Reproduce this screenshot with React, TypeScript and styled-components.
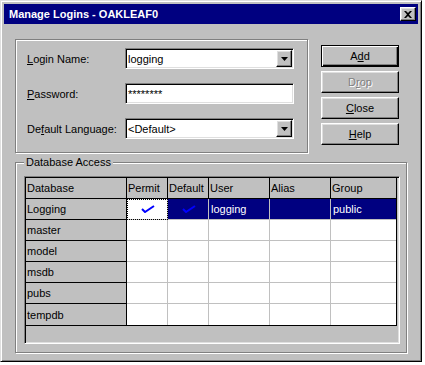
import React from 'react';
import styled, { createGlobalStyle } from 'styled-components';

//
// Global

const GlobalStyle = createGlobalStyle`
  html, body {
    margin: 0;
    padding: 0;
    background: #fff;
  }
  body {
    font-family: "Liberation Sans", Arial, sans-serif;
    font-size: 11px;
    color: #000;
  }
`;

//
// Styled Components

const Window = styled.div`
  box-sizing: border-box;
  width: 422px;
  height: 362px;
  padding: 3px;
  background: #c0c0c0;
  border: 1px solid;
  border-color: #dfdfdf #000 #000 #dfdfdf;
  box-shadow: inset 1px 1px #fff, inset -1px -1px #808080;
  display: flex;
  flex-direction: column;
`;

const TitleBar = styled.div`
  height: 20px;
  display: flex;
  align-items: center;
  justify-content: space-between;
  padding: 0 2px 0 5px;
  background: #000080;
  color: #fff;
  font-weight: bold;
  font-size: 11px;
`;

const Raised = styled.div`
  box-sizing: border-box;
  background: #c0c0c0;
  border: 1px solid;
  border-color: #fff #000 #000 #fff;
  box-shadow: inset -1px -1px #808080, inset 1px 1px #dfdfdf;
  display: flex;
  align-items: center;
  justify-content: center;
`;

const CloseBox = styled(Raised)`
  width: 16px;
  height: 14px;
`;

const Body = styled.div`
  display: flex;
  flex-direction: column;
  padding: 15px 0 0 11px;
`;

const TopRow = styled.div`
  display: flex;
  align-items: flex-start;
`;

const GroupBox = styled.div`
  position: relative;
  box-sizing: border-box;
  border: 1px solid #808080;
  box-shadow: inset 1px 1px #fff, 1px 1px #fff;
`;

const LoginGroup = styled(GroupBox)`
  width: 293px;
  height: 114px;
  padding: 8px 0 0 11px;
  display: flex;
  flex-direction: column;
  gap: 14px;
`;

const FieldRow = styled.div`
  display: flex;
  align-items: center;
  height: 21px;
`;

const Label = styled.div`
  width: 98px;
`;

const Key = styled.u`
  text-decoration: underline;
`;

const Field = styled.div`
  box-sizing: border-box;
  width: 169px;
  height: 21px;
  padding: 1px 1px 1px 1px;
  background: #fff;
  border: 1px solid;
  border-color: #808080 #fff #fff #808080;
  box-shadow: inset 1px 1px #000, inset -1px -1px #dfdfdf;
  display: flex;
  align-items: center;
`;

const FieldText = styled.span`
  flex: 1;
  padding-left: 1px;
`;

const DropArrow = styled(Raised)`
  width: 16px;
  height: 17px;
`;

const ButtonColumn = styled.div`
  display: flex;
  flex-direction: column;
  gap: 4px;
  margin: 6px 0 0 13px;
`;

const Btn = styled(Raised)<{ $default?: boolean; $disabled?: boolean }>`
  width: 78px;
  height: 22px;
  color: ${p => (p.$disabled ? '#808080' : '#000')};
  text-shadow: ${p => (p.$disabled ? '1px 1px #fff' : 'none')};
  ${p =>
    p.$default &&
    `
    border-color: #000;
    box-shadow: inset 1px 1px #fff, inset -1px -1px #000, inset -2px -2px #808080;
  `}
`;

const AccessGroup = styled(GroupBox)`
  width: 392px;
  height: 191px;
  margin-top: 9px;
  padding: 13px 0 0 8px;
`;

const Legend = styled.span`
  position: absolute;
  top: -7px;
  left: 8px;
  padding: 0 2px;
  line-height: 13px;
  background: #c0c0c0;
`;

const GridFrame = styled.div`
  box-sizing: border-box;
  width: 376px;
  height: 168px;
  padding: 1px;
  background: #c0c0c0;
  border: 1px solid;
  border-color: #808080 #fff #fff #808080;
  box-shadow: inset 1px 1px #000, inset -1px -1px #dfdfdf;
`;

const Table = styled.div`
  display: grid;
  grid-template-columns: 101px 41px 41px 61px 61px 65px;
  grid-auto-rows: 21px;
  width: fit-content;
  border-right: 1px solid #000;
  border-bottom: 1px solid #000;
`;

const HeadCell = styled.div<{ $last?: boolean }>`
  box-sizing: border-box;
  background: #c0c0c0;
  border-right: ${p => (p.$last ? 'none' : '1px solid #000')};
  border-bottom: 1px solid #000;
  padding-left: 1px;
  display: flex;
  align-items: center;
  white-space: nowrap;
  overflow: hidden;
`;

const RowHead = styled(HeadCell)<{ $lastRow?: boolean }>`
  border-bottom: ${p => (p.$lastRow ? 'none' : '1px solid #000')};
`;

const DataCell = styled.div<{
  $selected?: boolean;
  $focus?: boolean;
  $last?: boolean;
  $lastRow?: boolean;
  $center?: boolean;
}>`
  box-sizing: border-box;
  background: ${p => (p.$selected ? '#000080' : '#fff')};
  color: ${p => (p.$selected ? '#fff' : '#000')};
  border-right: ${p => (p.$last ? 'none' : '1px solid #c0c0c0')};
  border-bottom: ${p => (p.$lastRow ? 'none' : '1px solid #c0c0c0')};
  outline: ${p => (p.$focus ? '1px dotted #000' : 'none')};
  outline-offset: -1px;
  padding-left: 2px;
  display: flex;
  align-items: center;
  justify-content: ${p => (p.$center ? 'center' : 'flex-start')};
`;

//
// Icons

const CloseGlyph = () => (
  <svg width="8" height="7" viewBox="0 0 8 7">
    <path d="M0 0h2l2 2 2-2h2L5 3.5 8 7H6L4 5 2 7H0l3-3.5z" fill="#000" />
  </svg>
);

const DownTriangle = () => (
  <svg width="7" height="4" viewBox="0 0 7 4">
    <path d="M0 0h7L3.5 4z" fill="#000" />
  </svg>
);

const Check = () => (
  <svg width="14" height="8" viewBox="0 0 14 8">
    <path d="M1 4l3 3L13 1" fill="none" stroke="#0000ff" strokeWidth="2" />
  </svg>
);

//
// Data

const columns = ['Database', 'Permit', 'Default', 'User', 'Alias', 'Group'];

type Row = {
  name: string;
  permit?: boolean;
  isDefault?: boolean;
  user?: string;
  alias?: string;
  group?: string;
  selected?: boolean;
};

const rows: Row[] = [
  { name: 'Logging', permit: true, isDefault: true, user: 'logging', group: 'public', selected: true },
  { name: 'master' },
  { name: 'model' },
  { name: 'msdb' },
  { name: 'pubs' },
  { name: 'tempdb' },
];

//
// Main Component

export default function App(): JSX.Element {
  return (
    <>
      <GlobalStyle />
      <Window>
        <TitleBar>
          <span>Manage Logins - OAKLEAF0</span>
          <CloseBox>
            <CloseGlyph />
          </CloseBox>
        </TitleBar>
        <Body>
          <TopRow>
            <LoginGroup>
              <FieldRow>
                <Label>
                  <Key>L</Key>ogin Name:
                </Label>
                <Field>
                  <FieldText>logging</FieldText>
                  <DropArrow>
                    <DownTriangle />
                  </DropArrow>
                </Field>
              </FieldRow>
              <FieldRow>
                <Label>
                  <Key>P</Key>assword:
                </Label>
                <Field>
                  <FieldText>********</FieldText>
                </Field>
              </FieldRow>
              <FieldRow>
                <Label>
                  De<Key>f</Key>ault Language:
                </Label>
                <Field>
                  <FieldText>&lt;Default&gt;</FieldText>
                  <DropArrow>
                    <DownTriangle />
                  </DropArrow>
                </Field>
              </FieldRow>
            </LoginGroup>
            <ButtonColumn>
              <Btn $default>
                <span>
                  A<Key>d</Key>d
                </span>
              </Btn>
              <Btn $disabled>
                <span>
                  D<Key>r</Key>op
                </span>
              </Btn>
              <Btn>
                <span>
                  <Key>C</Key>lose
                </span>
              </Btn>
              <Btn>
                <span>
                  <Key>H</Key>elp
                </span>
              </Btn>
            </ButtonColumn>
          </TopRow>
          <AccessGroup>
            <Legend>Database Access</Legend>
            <GridFrame>
              <Table>
                {columns.map((c, i) => (
                  <HeadCell key={c} $last={i === columns.length - 1}>
                    {c}
                  </HeadCell>
                ))}
                {rows.map((r, ri) => {
                  const lastRow = ri === rows.length - 1;
                  return (
                    <React.Fragment key={r.name}>
                      <RowHead $lastRow={lastRow}>{r.name}</RowHead>
                      <DataCell $focus={r.selected} $lastRow={lastRow} $center>
                        {r.permit && <Check />}
                      </DataCell>
                      <DataCell $selected={r.selected} $lastRow={lastRow} $center>
                        {r.isDefault && <Check />}
                      </DataCell>
                      <DataCell $selected={r.selected} $lastRow={lastRow}>
                        {r.user}
                      </DataCell>
                      <DataCell $selected={r.selected} $lastRow={lastRow}>
                        {r.alias}
                      </DataCell>
                      <DataCell $selected={r.selected} $lastRow={lastRow} $last>
                        {r.group}
                      </DataCell>
                    </React.Fragment>
                  );
                })}
              </Table>
            </GridFrame>
          </AccessGroup>
        </Body>
      </Window>
    </>
  );
}
